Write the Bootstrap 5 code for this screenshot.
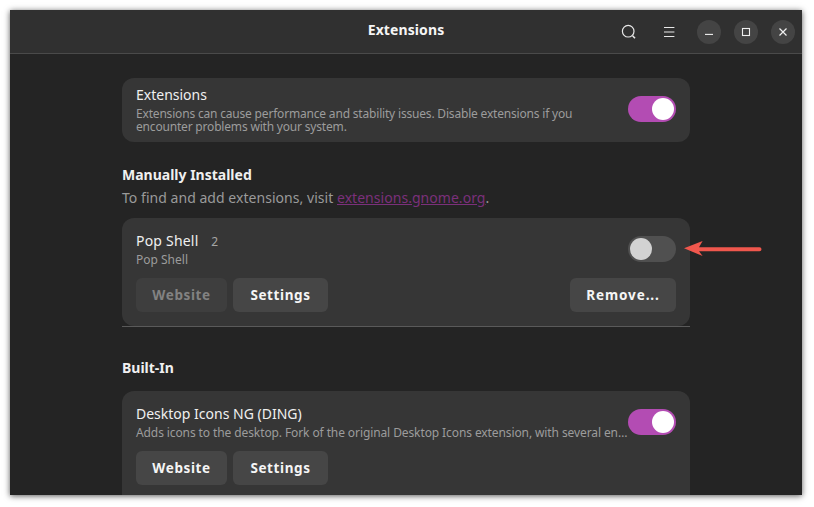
<!DOCTYPE html>
<html lang="en">
<head>
<meta charset="utf-8">
<title>Extensions</title>
<link rel="stylesheet" href="https://cdn.jsdelivr.net/npm/bootstrap@5.3.0/dist/css/bootstrap.min.css">
<style>
html,body{height:100%;margin:0;background:#fff;overflow:hidden}
body{padding:10px 12px 12px 10px;font-family:"Noto Sans",sans-serif;color:#fff}
.win{width:792px;height:485px;background:#242424;box-shadow:0 1px 6px rgba(0,0,0,.65);position:relative;overflow:hidden}
.hdr{height:44px;background:#303030;border-bottom:1px solid #4a4a4a;padding-right:7px}
.hdr-title{font-size:14px;font-weight:700;color:#f5f5f5;left:0;right:0;top:12px;line-height:16px;text-align:center;position:absolute;letter-spacing:.1px}
.hicon{width:24px;height:24px;display:flex;align-items:center;justify-content:center}
.hicon-search{margin-right:16px}
.hicon-menu{margin-right:16px}
.wctl{gap:13px}
.wbtn{width:24px;height:24px;border-radius:50%;background:#444;display:flex;align-items:center;justify-content:center}
.content{width:568px;margin-left:112px;padding-top:24px}
.ecard{background:#363636;border-radius:12px;padding:9px 14px 11px}
.ecard-top{height:64px}
.ename{font-size:14px;line-height:17px;color:#f0f0f0}
.ename-row{margin-top:5px}
.ename-pop{letter-spacing:.2px}
.edesc{font-size:12px;line-height:16px;color:#9c9c9c}
.edesc-top{line-height:13px;margin-top:4px;letter-spacing:-.185px}
.edesc-row{margin-top:2px}
.edesc-ding{line-height:15px;margin-top:3px;white-space:nowrap;letter-spacing:-.1px}
.ver{font-size:12px;color:#a5a5a5;margin-left:9px}
.sw{width:48px;height:26px;border-radius:13px;flex:none;padding:2px;display:flex}
.sw-low{margin-top:9px}
.sw i{display:block;width:22px;height:22px;border-radius:50%}
.sw-on{background:#b34cb3;justify-content:flex-end}
.sw-on i{background:#fff}
.sw-off{background:#505050}
.sw-off i{background:#d2d2d2}
.sect{font-size:14px;font-weight:700;line-height:17px;color:#f0f0f0}
.sect-first{margin-top:24px}
.sect-built{margin-top:32px}
.sub{font-size:14px;line-height:17px;color:#9a9a9a;margin-top:6px;letter-spacing:.04px}
.sub a{color:#7b307b}
.btnrow{margin-top:11px;gap:6px}
.btnrow-pop{margin-top:10px}
.xbtn{height:34px;border-radius:6px;background:#464646;border:0;color:#f5f5f5;font-size:13.5px;font-weight:700;letter-spacing:.6px;padding:0;line-height:34px}
.xbtn-off{background:#3e3e3e;color:#828282}
.xbtn-rm{letter-spacing:.9px}
.w91{width:91px}.w95{width:95px}.w106{width:106px}
.pop-wrap{margin-top:12px;border-bottom:1px solid #5a5a5a}
.pop{height:108px}
.ding{margin-top:15px;height:130px}
.pointer{position:absolute;left:674px;top:228px}
</style>
</head>
<body>
<div class="win d-flex flex-column">
  <div class="hdr d-flex align-items-center justify-content-end flex-shrink-0">
    <div class="hdr-title">Extensions</div>
    <div class="hicon hicon-search">
      <svg width="16" height="16" viewBox="0 0 16 16" fill="none" stroke="#e8e8e8" stroke-width="1.2"><circle cx="7.2" cy="7.2" r="5.8"/><path d="M11.6 11.8l2.4 2.4" stroke-width="1.6"/></svg>
    </div>
    <div class="hicon hicon-menu">
      <svg width="12" height="12" viewBox="0 0 12 12" stroke="#e8e8e8" stroke-width="1.1"><path d="M1 1.5h10.4M1 6h10.4M1 10.5h10.4"/></svg>
    </div>
    <div class="d-flex align-items-center wctl">
      <div class="wbtn"><svg width="10" height="10" viewBox="0 0 10 10" stroke="#f0f0f0" stroke-width="1.1"><path d="M1 7.4h8"/></svg></div>
      <div class="wbtn"><svg width="10" height="10" viewBox="0 0 10 10" fill="none" stroke="#f0f0f0" stroke-width="1.1"><rect x="1.5" y="1.5" width="7" height="7"/></svg></div>
      <div class="wbtn"><svg width="10" height="10" viewBox="0 0 10 10" stroke="#f0f0f0" stroke-width="1.2"><path d="M1.5 1.5l7 7M8.5 1.5l-7 7"/></svg></div>
    </div>
  </div>
  <div class="content flex-grow-1">
    <div class="ecard ecard-top d-flex justify-content-between align-items-center">
      <div>
        <div class="ename">Extensions</div>
        <div class="edesc edesc-top">Extensions can cause performance and stability issues. Disable extensions if you<br>encounter problems with your system.</div>
      </div>
      <div class="sw sw-on"><i></i></div>
    </div>
    <div class="sect sect-first">Manually Installed</div>
    <div class="sub">To find and add extensions, visit <a href="#">extensions.gnome.org</a>.</div>
    <div class="pop-wrap">
      <div class="ecard pop">
        <div class="d-flex justify-content-between">
          <div>
            <div class="ename ename-row ename-pop">Pop Shell <span class="ver">2</span></div>
            <div class="edesc edesc-row">Pop Shell</div>
          </div>
          <div class="sw sw-off sw-low"><i></i></div>
        </div>
        <div class="d-flex btnrow btnrow-pop">
          <button class="xbtn xbtn-off w91">Website</button>
          <button class="xbtn w95">Settings</button>
          <button class="xbtn xbtn-rm w106 ms-auto">Remove...</button>
        </div>
      </div>
    </div>
    <div class="sect sect-built">Built-In</div>
    <div class="ecard ding">
      <div class="d-flex justify-content-between">
        <div>
          <div class="ename ename-row">Desktop Icons NG (DING)</div>
          <div class="edesc edesc-ding">Adds icons to the desktop. Fork of the original Desktop Icons extension, with several en…</div>
        </div>
        <div class="sw sw-on sw-low"><i></i></div>
      </div>
      <div class="d-flex btnrow">
        <button class="xbtn w91">Website</button>
        <button class="xbtn w95">Settings</button>
      </div>
    </div>
  </div>
  <svg class="pointer" width="82" height="22" viewBox="0 0 82 22" fill="#f0574d" stroke="none">
    <path d="M0 10.3 L18.6 3 L15 9.3 L75.5 9.3 A2 2 0 0 1 75.5 13.3 L15 13.3 L18.6 18 Z"/>
  </svg>
</div>
<script src="https://cdn.jsdelivr.net/npm/bootstrap@5.3.0/dist/js/bootstrap.bundle.min.js"></script>
</body>
</html>
